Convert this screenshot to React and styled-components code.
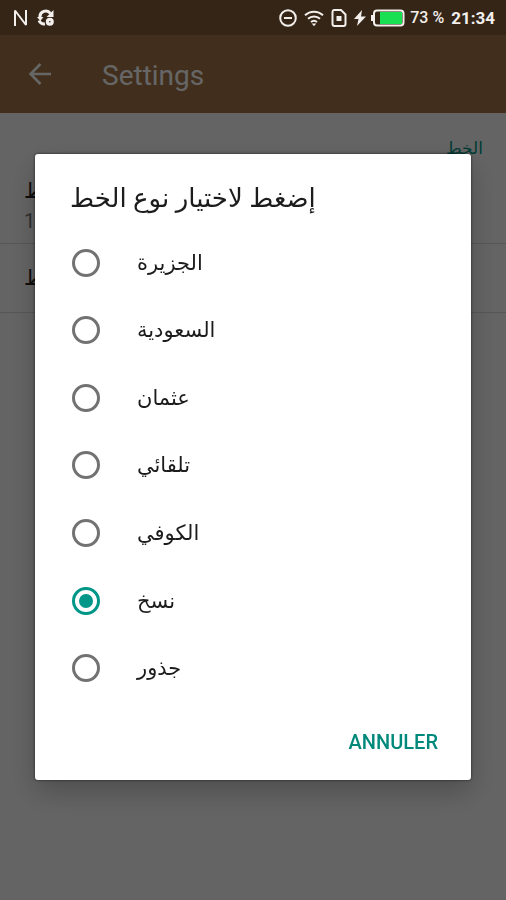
import React, { useState } from "react";
import styled, { createGlobalStyle } from "styled-components";

const GlobalStyle = createGlobalStyle`
  * { box-sizing: border-box; }
  body {
    margin: 0;
    background: #fafafa;
    font-family: Roboto, "DejaVu Sans", sans-serif;
    color: #212121;
  }
`;

const Screen = styled.div`
  display: flex;
  flex-direction: column;
  min-height: 100vh;
`;

const StatusBar = styled.div`
  position: relative;
  z-index: 3;
  display: flex;
  align-items: center;
  justify-content: space-between;
  height: 35px;
  padding: 0 11px 0 13px;
  background: #352516;
  color: #f2efec;
`;

const StatusGroup = styled.div`
  display: flex;
  align-items: center;
  gap: ${(p) => p.$gap}px;
  svg { display: block; flex: none; }
`;

const StatusText = styled.span`
  font-size: ${(p) => (p.$strong ? 17 : 16)}px;
  line-height: 24px;
  font-weight: ${(p) => (p.$strong ? 700 : 500)};
  white-space: nowrap;
`;

const AppBar = styled.header`
  display: flex;
  align-items: center;
  gap: 48px;
  height: 78px;
  padding: 4px 26px 0;
  background: #a47446;
  color: #fff;
`;

const BackButton = styled.button`
  display: flex;
  padding: 0;
  border: 0;
  background: none;
  color: inherit;
`;

const AppTitle = styled.h1`
  margin: 0;
  font-size: 28px;
  line-height: 32px;
  font-weight: 400;
`;

const SectionTitle = styled.h2`
  margin: 0;
  padding: 23px 23px 0;
  height: 54px;
  font-size: 17px;
  line-height: 24px;
  font-weight: 400;
  text-align: right;
  color: #009688;
`;

const Preference = styled.div`
  display: flex;
  flex-direction: column;
  justify-content: center;
  height: ${(p) => (p.$tall ? 77 : 69)}px;
  padding: 0 24px;
  border-bottom: 1px solid #d8d8d8;
`;

const PreferenceName = styled.span`
  font-size: 21px;
  line-height: 32px;
`;

const PreferenceValue = styled.span`
  font-size: 20px;
  line-height: 28px;
  color: #757575;
`;

const Scrim = styled.div`
  position: fixed;
  inset: 0;
  z-index: 2;
  display: flex;
  align-items: center;
  padding: 34px 35px 0;
  background: rgba(0, 0, 0, 0.6);
`;

const Dialog = styled.form`
  width: 100%;
  background: #fff;
  border-radius: 3px;
  box-shadow: 0 0 3px rgba(0, 0, 0, 0.7), 0 12px 28px rgba(0, 0, 0, 0.22);
`;

const DialogTitle = styled.h2`
  margin: 0;
  padding: 26px 35px 13px;
  font-size: 26px;
  line-height: 36px;
  font-weight: 400;
  color: #1c1c1c;
`;

const Options = styled.div`
  display: grid;
  grid-template-rows: repeat(7, 1fr);
  height: 473px;
`;

const Option = styled.label`
  display: flex;
  align-items: center;
  gap: 37px;
  padding: 0 37px;
  font-size: 21px;
  line-height: 32px;
  color: #1c1c1c;
`;

const Radio = styled.input`
  appearance: none;
  display: grid;
  place-items: center;
  flex: none;
  width: 28px;
  height: 28px;
  margin: 0;
  border: 3px solid #727272;
  border-radius: 50%;

  &:checked { border-color: #009688; }
  &:checked::before {
    content: "";
    width: 14px;
    height: 14px;
    border-radius: 50%;
    background: #009688;
  }
`;

const Actions = styled.div`
  display: flex;
  justify-content: flex-end;
  padding: 22px 25px 20px;
`;

const TextButton = styled.button`
  padding: 0 8px;
  border: 0;
  background: none;
  color: #00897b;
  font-family: inherit;
  font-size: 20px;
  line-height: 36px;
  font-weight: 500;
`;

const fonts = ["الجزيرة", "السعودية", "عثمان", "تلقائي", "الكوفي", "نسخ", "جذور"];

function NIcon() {
  return (
    <svg width="16" height="18" viewBox="0 0 16 18" fill="none" stroke="currentColor" strokeWidth="2" strokeLinejoin="bevel" aria-hidden="true">
      <path d="M2 17V1.500L13 16V1" />
    </svg>
  );
}

function SyncIcon() {
  return (
    <svg width="18" height="18" viewBox="0 0 18 18" fill="none" stroke="currentColor" aria-hidden="true">
      <path d="M3 8.500a5.800 5.800 0 0 1 10.500-4" strokeWidth="3" />
      <path d="M16.500 1V8H9.500Z" fill="currentColor" stroke="none" />
      <path d="M0 8h6.500L3.300 12Z" fill="currentColor" stroke="none" />
      <path d="M2 11.500a6 6 0 0 0 6 3.500" strokeWidth="3" />
      <circle cx="12.800" cy="12.800" r="2.400" strokeWidth="3.200" />
    </svg>
  );
}

function DoNotDisturbIcon() {
  return (
    <svg width="18" height="18" viewBox="0 0 18 18" fill="none" stroke="currentColor" strokeWidth="2" aria-hidden="true">
      <circle cx="9" cy="9" r="7.800" />
      <path d="M5 9h8" />
    </svg>
  );
}

function WifiIcon() {
  return (
    <svg width="20" height="18" viewBox="0 0 20 18" fill="none" stroke="currentColor" strokeWidth="2" aria-hidden="true">
      <path d="M1 6.300a13 13 0 0 1 18 0M4 9.800a8.800 8.800 0 0 1 12 0M7 13a4.600 4.600 0 0 1 6 0" />
      <path d="M7.700 14.500h4.600L10 17.200Z" fill="currentColor" stroke="none" />
    </svg>
  );
}

function SimIcon() {
  return (
    <svg width="16" height="18" viewBox="0 0 16 18" fill="none" stroke="currentColor" strokeWidth="2" aria-hidden="true">
      <path d="M3 1h7l4.500 4.500V15a2 2 0 0 1-2 2H3.500a2 2 0 0 1-2-2V3A2 2 0 0 1 3 1Z" />
      <rect x="5.500" y="7" width="5" height="5" fill="currentColor" stroke="none" />
    </svg>
  );
}

function BoltIcon() {
  return (
    <svg width="12" height="16" viewBox="0 0 12 16" fill="currentColor" aria-hidden="true">
      <path d="M8 0 0 9h4.500L3 16l9-9.500H7Z" />
    </svg>
  );
}

function BatteryIcon() {
  return (
    <svg width="34" height="18" viewBox="0 0 34 18" fill="none" aria-hidden="true">
      <path d="M1 6v6" stroke="currentColor" strokeWidth="2" />
      <rect x="3" y="1.500" width="29.500" height="15" rx="3" stroke="currentColor" strokeWidth="2" />
      <rect x="9" y="3" width="22" height="12" fill="#18e052" />
    </svg>
  );
}

function ArrowIcon() {
  return (
    <svg width="28" height="28" viewBox="0 0 28 28" fill="none" stroke="currentColor" strokeWidth="2.600" aria-hidden="true">
      <path d="M14.500 2 4.500 12 14.500 22M4.500 12H25" />
    </svg>
  );
}

export default function App() {
  const [selected, setSelected] = useState("نسخ");

  return (
    <Screen>
      <GlobalStyle />
      <StatusBar>
        <StatusGroup $gap={8}>
          <NIcon />
          <SyncIcon />
        </StatusGroup>
        <StatusGroup $gap={7}>
          <DoNotDisturbIcon />
          <WifiIcon />
          <SimIcon />
          <StatusGroup $gap={5}>
            <BoltIcon />
            <BatteryIcon />
            <StatusText>73 %</StatusText>
          </StatusGroup>
          <StatusText $strong>21:34</StatusText>
        </StatusGroup>
      </StatusBar>
      <AppBar>
        <BackButton type="button" aria-label="Back">
          <ArrowIcon />
        </BackButton>
        <AppTitle>Settings</AppTitle>
      </AppBar>
      <main>
        <SectionTitle lang="ar">الخط</SectionTitle>
        <Preference $tall>
          <PreferenceName lang="ar">حجم الخط</PreferenceName>
          <PreferenceValue>18</PreferenceValue>
        </Preference>
        <Preference>
          <PreferenceName lang="ar">نوع الخط</PreferenceName>
        </Preference>
      </main>
      <Scrim>
        <Dialog role="dialog" aria-modal="true" aria-labelledby="dialog-title">
          <DialogTitle id="dialog-title" lang="ar">إضغط لاختيار نوع الخط</DialogTitle>
          <Options role="radiogroup" aria-labelledby="dialog-title">
            {fonts.map((name) => (
              <Option key={name} lang="ar">
                <Radio
                  type="radio"
                  name="font"
                  value={name}
                  checked={selected === name}
                  onChange={() => setSelected(name)}
                />
                {name}
              </Option>
            ))}
          </Options>
          <Actions>
            <TextButton type="button">ANNULER</TextButton>
          </Actions>
        </Dialog>
      </Scrim>
    </Screen>
  );
}
